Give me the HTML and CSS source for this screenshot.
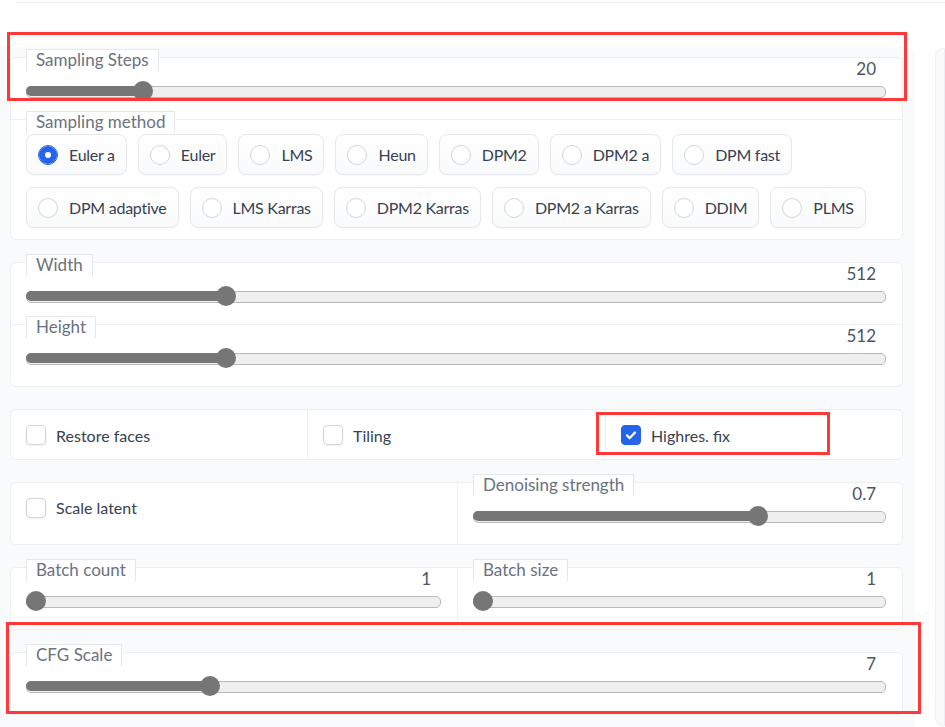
FILE: index.html
```html
<!DOCTYPE html>
<html lang="en">
<head>
    <meta charset="UTF-8">
    <meta name="viewport" content="width=device-width, initial-scale=1.0">
    <title>txt2img settings</title>
    <link rel="stylesheet" href="styles.css">
</head>
<body>
    <div class="top-edge"></div>

    <div class="layout">
        <div class="panel-left">
            <div class="stack">

                <!-- steps + sampler -->
                <div class="card">
                    <div class="field">
                        <div class="field-head">
                            <span class="tab">Sampling Steps</span>
                            <span class="value">20</span>
                        </div>
                        <div class="slider" style="--p: 0.1275"><div class="slider-fill"></div><div class="slider-thumb"></div></div>
                    </div>
                    <div class="field field-radio">
                        <div class="field-head">
                            <span class="tab">Sampling method</span>
                        </div>
                        <div class="radio-group">
                            <label class="radio-item"><span class="radio checked"></span>Euler a</label>
                            <label class="radio-item"><span class="radio"></span>Euler</label>
                            <label class="radio-item"><span class="radio"></span>LMS</label>
                            <label class="radio-item"><span class="radio"></span>Heun</label>
                            <label class="radio-item"><span class="radio"></span>DPM2</label>
                            <label class="radio-item"><span class="radio"></span>DPM2 a</label>
                            <label class="radio-item"><span class="radio"></span>DPM fast</label>
                            <label class="radio-item"><span class="radio"></span>DPM adaptive</label>
                            <label class="radio-item"><span class="radio"></span>LMS Karras</label>
                            <label class="radio-item"><span class="radio"></span>DPM2 Karras</label>
                            <label class="radio-item"><span class="radio"></span>DPM2 a Karras</label>
                            <label class="radio-item"><span class="radio"></span>DDIM</label>
                            <label class="radio-item"><span class="radio"></span>PLMS</label>
                        </div>
                    </div>
                </div>

                <!-- size -->
                <div class="card">
                    <div class="field">
                        <div class="field-head">
                            <span class="tab">Width</span>
                            <span class="value">512</span>
                        </div>
                        <div class="slider" style="--p: 0.2258"><div class="slider-fill"></div><div class="slider-thumb"></div></div>
                    </div>
                    <div class="field">
                        <div class="field-head">
                            <span class="tab">Height</span>
                            <span class="value">512</span>
                        </div>
                        <div class="slider" style="--p: 0.2258"><div class="slider-fill"></div><div class="slider-thumb"></div></div>
                    </div>
                </div>

                <!-- toggles -->
                <div class="card row-3">
                    <label class="check-cell"><span class="checkbox"></span>Restore faces</label>
                    <label class="check-cell"><span class="checkbox"></span>Tiling</label>
                    <label class="check-cell">
                        <span class="checkbox checked">
                            <svg viewBox="0 0 20 20" width="20" height="20"><path d="M6 10.4l2.7 2.7 5.3-5.6" fill="none" stroke="#fff" stroke-width="2.2" stroke-linecap="round" stroke-linejoin="round"/></svg>
                        </span>Highres. fix
                    </label>
                </div>

                <div class="card row-2">
                    <label class="check-cell check-top"><span class="checkbox"></span>Scale latent</label>
                    <div class="field">
                        <div class="field-head">
                            <span class="tab">Denoising strength</span>
                            <span class="value">0.7</span>
                        </div>
                        <div class="slider" style="--p: 0.7"><div class="slider-fill"></div><div class="slider-thumb"></div></div>
                    </div>
                </div>

                <div class="card row-2">
                    <div class="field">
                        <div class="field-head">
                            <span class="tab">Batch count</span>
                            <span class="value">1</span>
                        </div>
                        <div class="slider" style="--p: 0"><div class="slider-fill"></div><div class="slider-thumb"></div></div>
                    </div>
                    <div class="field">
                        <div class="field-head">
                            <span class="tab">Batch size</span>
                            <span class="value">1</span>
                        </div>
                        <div class="slider" style="--p: 0"><div class="slider-fill"></div><div class="slider-thumb"></div></div>
                    </div>
                </div>

                <div class="card">
                    <div class="field">
                        <div class="field-head">
                            <span class="tab">CFG Scale</span>
                            <span class="value">7</span>
                        </div>
                        <div class="slider" style="--p: 0.2069"><div class="slider-fill"></div><div class="slider-thumb"></div></div>
                    </div>
                </div>

            </div>
        </div>
        <div class="panel-right"></div>
    </div>

    <!-- annotation boxes drawn over the screenshot -->
    <div class="mark mark-steps"></div>
    <div class="mark mark-highres"></div>
    <div class="mark mark-cfg"></div>
</body>
</html>
```

FILE: styles.css
```css
* {
    margin: 0;
    padding: 0;
    box-sizing: border-box;
}

body {
    background-color: #fff;
    color: #374151;
    font-family: Lato, "Noto Sans", sans-serif;
    font-size: 16px;
    position: relative;
    overflow: hidden;
    height: 727px;
}

.top-edge {
    height: 3px;
    margin-left: 15px;
    border-bottom: 1px solid #eceef2;
    border-bottom-left-radius: 6px;
}

.layout {
    display: flex;
    margin-top: 44px;
}

.panel-left {
    width: 915px;
    flex-shrink: 0;
    background-color: #f9fafb;
    padding: 10px 12px 30px 10px;
    border-top-right-radius: 8px;
}

.panel-right {
    flex: 1;
    margin-left: 20px;
    margin-top: 1px;
    height: 678px;
    background-color: #f9fafb;
    border: 1px solid #eef0f3;
    border-radius: 8px 0 0 8px;
}

.stack {
    display: flex;
    flex-direction: column;
    gap: 22px;
}

.card {
    background-color: #fff;
    border: 1px solid #eceef1;
    border-radius: 6px;
}

/* one labelled control */
.field {
    padding: 0 16px 18px 15px;
}

.field + .field {
    border-top: 1px solid #eef0f3;
}

.field-head {
    display: flex;
    justify-content: space-between;
    align-items: flex-end;
    height: 30px;
    margin-top: -9px;
}

.tab {
    align-self: flex-start;
    height: 22px;
    line-height: 20px;
    padding: 0 9px;
    background-color: #fff;
    border: 1px solid #e5e7eb;
    border-bottom: none;
    color: #6b7280;
    font-size: 17px;
}

.value {
    line-height: 20px;
    margin-right: 10px;
    color: #4b5563;
    font-size: 17px;
}

.slider {
    position: relative;
    height: 20px;
    margin-top: 2px;
}

.slider::before {
    content: '';
    position: absolute;
    left: 0;
    right: 0;
    top: 5px;
    height: 10px;
    background-color: #efefef;
    border: 1px solid #b9b9b9;
    border-radius: 5px;
}

.slider-fill {
    position: absolute;
    left: 0;
    top: 5px;
    height: 10px;
    width: calc(var(--p) * (100% - 20px) + 10px);
    background-color: #767676;
    border-radius: 5px;
}

.slider-thumb {
    position: absolute;
    top: 0;
    left: calc(var(--p) * (100% - 20px));
    width: 20px;
    height: 20px;
    border-radius: 50%;
    background-color: #767676;
}

/* sampler radios */
.field-radio {
    padding-bottom: 11px;
}

.field-radio .field-head {
    height: 22px;
}

.radio-group {
    display: flex;
    flex-wrap: wrap;
    gap: 12px 11px;
    margin-top: 1px;
}

.radio-item {
    display: flex;
    align-items: center;
    gap: 11px;
    height: 41px;
    padding: 0 11px;
    border: 1px solid #e5e7eb;
    border-radius: 8px;
    background: linear-gradient(#fff, #f9fafb);
    box-shadow: 0 1px 2px rgba(0, 0, 0, 0.03);
    letter-spacing: -0.25px;
    white-space: nowrap;
    cursor: pointer;
}

.radio {
    width: 20px;
    height: 20px;
    flex-shrink: 0;
    border-radius: 50%;
    border: 1px solid #d1d5db;
    background-color: #fff;
}

.radio.checked {
    border-color: #2563eb;
    background-color: #fff;
    box-shadow: inset 0 0 0 6px #2563eb;
}

/* checkbox rows */
.row-3 {
    display: grid;
    grid-template-columns: 296px 298px 1fr;
}

.row-2 {
    display: grid;
    grid-template-columns: 446px 1fr;
}

.row-3 > * + *,
.row-2 > * + * {
    border-left: 1px solid #eef0f3;
}

.row-2 > .field + .field {
    border-top: none;
}

.check-cell {
    display: flex;
    align-items: center;
    gap: 10px;
    padding: 15px 15px 14px;
    cursor: pointer;
}

.check-top {
    align-items: flex-start;
    line-height: 20px;
}

.checkbox {
    width: 20px;
    height: 20px;
    flex-shrink: 0;
    border: 1px solid #d1d5db;
    border-radius: 4px;
    background-color: #fff;
    box-shadow: 0 1px 2px rgba(0, 0, 0, 0.05);
}

.checkbox.checked {
    border-color: #2563eb;
    background-color: #2563eb;
}

.checkbox svg {
    display: block;
    margin: -1px;
}

/* red annotation frames */
.mark {
    position: absolute;
    border: 3px solid #ff3838;
}

.mark-steps {
    left: 7px;
    top: 32px;
    width: 900px;
    height: 69px;
}

.mark-highres {
    left: 596px;
    top: 412px;
    width: 234px;
    height: 43px;
}

.mark-cfg {
    left: 6px;
    top: 622px;
    width: 915px;
    height: 92px;
}
```
